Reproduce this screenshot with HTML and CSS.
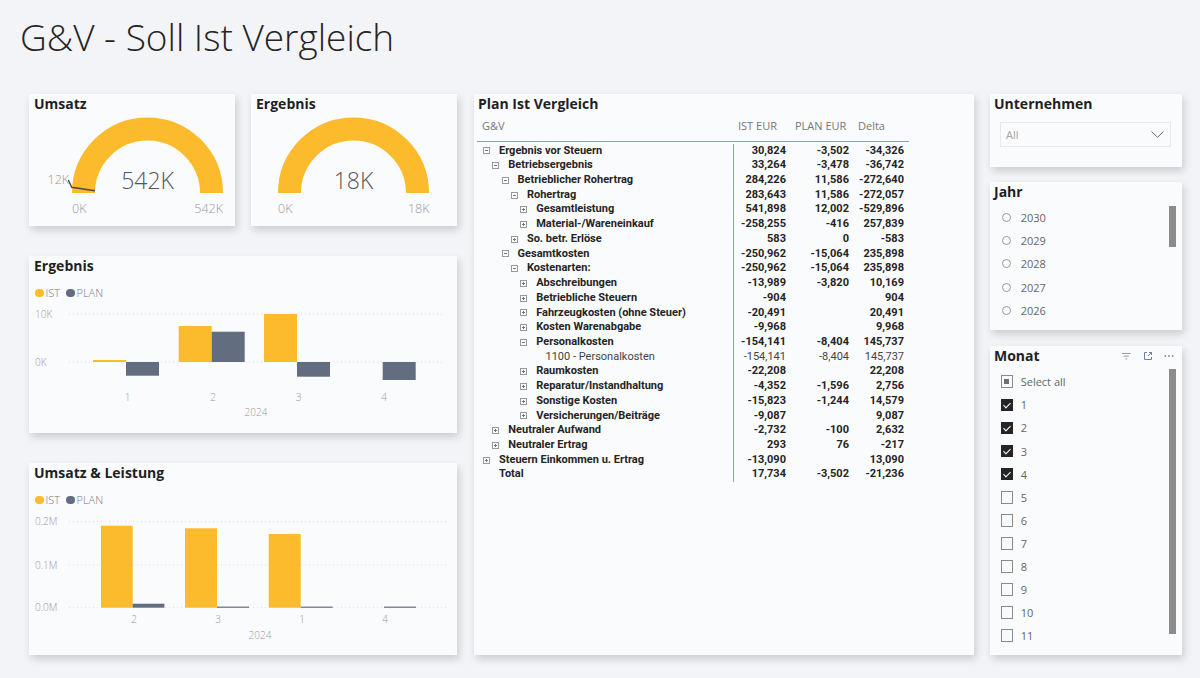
FILE: index.html
```html
<!DOCTYPE html>
<html lang="de">
<head>
<meta charset="utf-8">
<title>G&amp;V - Soll Ist Vergleich</title>
<link rel="stylesheet" href="styles.css">
</head>
<body>
<div class="header"><h1 class="title">G&amp;V - Soll Ist Vergleich</h1></div>
<div class="main">
  <div class="col-left">
    <div class="gauges">
      <div class="card gauge">
        <div class="card-title">Umsatz</div>
        <svg class="gsvg" width="206" height="112" viewBox="0 0 206 112">
          <path class="arc" d="M54.5 79 A64 64 0 0 1 182.5 79"/>
          <polyline class="target" points="39.3,66 42.7,73.3 66,76.7"/>
          <text class="gval" x="118.5" y="75">542K</text>
          <text class="glab" x="43" y="99">0K</text>
          <text class="glab end" x="194" y="99">542K</text>
          <text class="glab" x="18.5" y="69.5">12K</text>
        </svg>
      </div>
      <div class="card gauge">
        <div class="card-title">Ergebnis</div>
        <svg class="gsvg" width="206" height="112" viewBox="0 0 206 112">
          <path class="arc" d="M38.5 79 A64 64 0 0 1 166.5 79"/>
          <text class="gval" x="102.5" y="75">18K</text>
          <text class="glab" x="27" y="99">0K</text>
          <text class="glab end" x="178.5" y="99">18K</text>
        </svg>
      </div>
    </div>

    <div class="card chart1">
      <div class="card-title">Ergebnis</div>
      <div class="legend"><span class="dot ist"></span><span class="lt">IST</span><span class="dot plan"></span><span class="lt">PLAN</span></div>
      <svg class="csvg" width="428" height="129" viewBox="0 0 428 129">
        <line class="grid" x1="40" x2="413" y1="10" y2="10"/>
        <line class="grid" x1="40" x2="413" y1="58" y2="58"/>
        <text class="ax" x="6" y="13.5">10K</text>
        <text class="ax" x="6" y="61.5">0K</text>
        <rect class="by" x="64" y="56" width="33" height="2"/>
        <rect class="bg" x="97" y="58" width="33" height="13.7"/>
        <rect class="by" x="149.7" y="22" width="33" height="36"/>
        <rect class="bg" x="182.7" y="27.7" width="33" height="30.3"/>
        <rect class="by" x="235" y="10" width="33" height="48"/>
        <rect class="bg" x="268" y="58" width="33" height="14.7"/>
        <rect class="bg" x="353.7" y="58" width="33" height="18"/>
        <text class="ax mid" x="98.5" y="96.5">1</text>
        <text class="ax mid" x="184" y="96.5">2</text>
        <text class="ax mid" x="269.5" y="96.5">3</text>
        <text class="ax mid" x="355" y="96.5">4</text>
        <text class="ax mid" x="227" y="111.5">2024</text>
      </svg>
    </div>

    <div class="card chart2">
      <div class="card-title">Umsatz &amp; Leistung</div>
      <div class="legend"><span class="dot ist"></span><span class="lt">IST</span><span class="dot plan"></span><span class="lt">PLAN</span></div>
      <svg class="csvg" width="428" height="144" viewBox="0 0 428 144">
        <line class="grid" x1="40" x2="419" y1="10.7" y2="10.7"/>
        <line class="grid" x1="40" x2="419" y1="54" y2="54"/>
        <line class="grid" x1="40" x2="419" y1="96.7" y2="96.7"/>
        <text class="ax" x="6" y="14.2">0.2M</text>
        <text class="ax" x="6" y="57.5">0.1M</text>
        <text class="ax" x="6" y="100.2">0.0M</text>
        <rect class="by" x="72" y="14.7" width="31.7" height="82"/>
        <rect class="bg" x="103.7" y="92.7" width="31.7" height="4"/>
        <rect class="by" x="156" y="17.3" width="32" height="79.4"/>
        <rect class="bg" x="188" y="95.6" width="32" height="1.2"/>
        <rect class="by" x="239.7" y="23" width="32" height="73.7"/>
        <rect class="bg" x="271.7" y="95.6" width="32" height="1.2"/>
        <rect class="bg" x="355" y="95.6" width="32" height="1.2"/>
        <text class="ax mid" x="105" y="111.5">2</text>
        <text class="ax mid" x="189" y="111.5">3</text>
        <text class="ax mid" x="273" y="111.5">1</text>
        <text class="ax mid" x="356" y="111.5">4</text>
        <text class="ax mid" x="231" y="127.5">2024</text>
      </svg>
    </div>
  </div>

  <div class="col-mid">
    <div class="card matrix">
      <div class="card-title mt">Plan Ist Vergleich</div>
      <div class="tbl">
        <div class="thead"><span class="hc">G&amp;V</span><span class="hc">IST EUR</span><span class="hc">PLAN EUR</span><span class="hc">Delta</span></div>
        <div class="rows">
          <div class="row"><span class="lab l0"><i class="tg m"></i>Ergebnis vor Steuern</span><span class="num ist">30,824</span><span class="num">-3,502</span><span class="num dl">-34,326</span></div>
          <div class="row"><span class="lab l1"><i class="tg m"></i>Betriebsergebnis</span><span class="num ist">33,264</span><span class="num">-3,478</span><span class="num dl">-36,742</span></div>
          <div class="row"><span class="lab l2"><i class="tg m"></i>Betrieblicher Rohertrag</span><span class="num ist">284,226</span><span class="num">11,586</span><span class="num dl">-272,640</span></div>
          <div class="row"><span class="lab l3"><i class="tg m"></i>Rohertrag</span><span class="num ist">283,643</span><span class="num">11,586</span><span class="num dl">-272,057</span></div>
          <div class="row"><span class="lab l4"><i class="tg p"></i>Gesamtleistung</span><span class="num ist">541,898</span><span class="num">12,002</span><span class="num dl">-529,896</span></div>
          <div class="row"><span class="lab l4"><i class="tg p"></i>Material-/Wareneinkauf</span><span class="num ist">-258,255</span><span class="num">-416</span><span class="num dl">257,839</span></div>
          <div class="row"><span class="lab l3"><i class="tg p"></i>So. betr. Erlöse</span><span class="num ist">583</span><span class="num">0</span><span class="num dl">-583</span></div>
          <div class="row"><span class="lab l2"><i class="tg m"></i>Gesamtkosten</span><span class="num ist">-250,962</span><span class="num">-15,064</span><span class="num dl">235,898</span></div>
          <div class="row"><span class="lab l3"><i class="tg m"></i>Kostenarten:</span><span class="num ist">-250,962</span><span class="num">-15,064</span><span class="num dl">235,898</span></div>
          <div class="row"><span class="lab l4"><i class="tg p"></i>Abschreibungen</span><span class="num ist">-13,989</span><span class="num">-3,820</span><span class="num dl">10,169</span></div>
          <div class="row"><span class="lab l4"><i class="tg p"></i>Betriebliche Steuern</span><span class="num ist">-904</span><span class="num"></span><span class="num dl">904</span></div>
          <div class="row"><span class="lab l4"><i class="tg p"></i>Fahrzeugkosten (ohne Steuer)</span><span class="num ist">-20,491</span><span class="num"></span><span class="num dl">20,491</span></div>
          <div class="row"><span class="lab l4"><i class="tg p"></i>Kosten Warenabgabe</span><span class="num ist">-9,968</span><span class="num"></span><span class="num dl">9,968</span></div>
          <div class="row"><span class="lab l4"><i class="tg m"></i>Personalkosten</span><span class="num ist">-154,141</span><span class="num">-8,404</span><span class="num dl">145,737</span></div>
          <div class="row leaf"><span class="lab l5"><i class="tg none"></i>1100 - Personalkosten</span><span class="num ist">-154,141</span><span class="num">-8,404</span><span class="num dl">145,737</span></div>
          <div class="row"><span class="lab l4"><i class="tg p"></i>Raumkosten</span><span class="num ist">-22,208</span><span class="num"></span><span class="num dl">22,208</span></div>
          <div class="row"><span class="lab l4"><i class="tg p"></i>Reparatur/Instandhaltung</span><span class="num ist">-4,352</span><span class="num">-1,596</span><span class="num dl">2,756</span></div>
          <div class="row"><span class="lab l4"><i class="tg p"></i>Sonstige Kosten</span><span class="num ist">-15,823</span><span class="num">-1,244</span><span class="num dl">14,579</span></div>
          <div class="row"><span class="lab l4"><i class="tg p"></i>Versicherungen/Beiträge</span><span class="num ist">-9,087</span><span class="num"></span><span class="num dl">9,087</span></div>
          <div class="row"><span class="lab l1"><i class="tg p"></i>Neutraler Aufwand</span><span class="num ist">-2,732</span><span class="num">-100</span><span class="num dl">2,632</span></div>
          <div class="row"><span class="lab l1"><i class="tg p"></i>Neutraler Ertrag</span><span class="num ist">293</span><span class="num">76</span><span class="num dl">-217</span></div>
          <div class="row"><span class="lab l0"><i class="tg p"></i>Steuern Einkommen u. Ertrag</span><span class="num ist">-13,090</span><span class="num"></span><span class="num dl">13,090</span></div>
          <div class="row"><span class="lab l0"><i class="tg none"></i>Total</span><span class="num ist">17,734</span><span class="num">-3,502</span><span class="num dl">-21,236</span></div>
        </div>
      </div>
    </div>
  </div>

  <div class="col-right">
    <div class="card s-unt">
      <div class="card-title st">Unternehmen</div>
      <div class="dropdown"><span>All</span>
        <svg width="13" height="7" viewBox="0 0 13 7"><polyline points="0.5,0.5 6.5,6.3 12.5,0.5" class="chev"/></svg>
      </div>
    </div>
    <div class="card s-jahr">
      <div class="card-title st">Jahr</div>
      <div class="sbody">
        <div class="slist">
          <div class="sitem"><span class="radio"></span>2030</div>
          <div class="sitem"><span class="radio"></span>2029</div>
          <div class="sitem"><span class="radio"></span>2028</div>
          <div class="sitem"><span class="radio"></span>2027</div>
          <div class="sitem"><span class="radio"></span>2026</div>
        </div>
        <div class="track"><div class="thumb j"></div></div>
      </div>
    </div>
    <div class="card s-monat">
      <div class="shead">
        <div class="card-title st">Monat</div>
        <div class="icons">
          <svg width="9" height="7" viewBox="0 0 9 7" class="ic"><path d="M0 0.5H8.5M1.7 3.2H6.8M3.3 5.9H5.2" class="icf"/></svg>
          <svg width="10" height="10" viewBox="0 0 10 10" class="ic ic2"><path d="M4 1.5H1.5V8.5H8.5V6M5 5L8.5 1.5M6 1.5H8.5V4" class="icb"/></svg>
          <svg width="10" height="4" viewBox="0 0 10 4" class="ic ic3"><circle cx="1.3" cy="2" r="0.9"/><circle cx="5" cy="2" r="0.9"/><circle cx="8.7" cy="2" r="0.9"/></svg>
        </div>
      </div>
      <div class="sbody m">
        <div class="slist">
          <div class="sitem"><span class="cb all"></span>Select all</div>
          <div class="sitem"><span class="cb on"></span>1</div>
          <div class="sitem"><span class="cb on"></span>2</div>
          <div class="sitem"><span class="cb on"></span>3</div>
          <div class="sitem"><span class="cb on"></span>4</div>
          <div class="sitem"><span class="cb"></span>5</div>
          <div class="sitem"><span class="cb"></span>6</div>
          <div class="sitem"><span class="cb"></span>7</div>
          <div class="sitem"><span class="cb"></span>8</div>
          <div class="sitem"><span class="cb"></span>9</div>
          <div class="sitem"><span class="cb"></span>10</div>
          <div class="sitem"><span class="cb"></span>11</div>
        </div>
        <div class="track"><div class="thumb mo"></div></div>
      </div>
    </div>
  </div>
</div>
</body>
</html>
```

FILE: styles.css
```css
* { box-sizing: border-box; margin: 0; padding: 0; }
html, body { width: 1200px; height: 678px; overflow: hidden; }
body { background: #f3f4f8; font-family: "Open Sans", sans-serif; color: #252423; }

.header { height: 94px; padding: 17px 0 0 20px; }
.title { font-weight: 300; font-size: 37px; line-height: 40px; color: #252423; }

.main { display: flex; padding-left: 29px; }
.col-left { width: 428px; display: flex; flex-direction: column; }
.col-mid { width: 500px; margin-left: 17px; }
.col-right { width: 192px; margin-left: 16px; display: flex; flex-direction: column; }

.card { background: #fafbfd; box-shadow: 2px 4px 8px rgba(0, 0, 0, 0.17); }
.card-title { font-weight: 700; font-size: 14px; line-height: 20px; padding-left: 5px; color: #1f1f1f; }

.gauges { display: flex; gap: 16px; }
.gauge { width: 206px; height: 132px; }
.gsvg { display: block; }
.arc { fill: none; stroke: #fcbb2c; stroke-width: 23; }
.target { fill: none; stroke: #4a4a4a; stroke-width: 1.4; }
.gval { font-family: "Open Sans", sans-serif; font-weight: 300; font-size: 23px; fill: #555; text-anchor: middle; }
.glab { font-family: "Open Sans", sans-serif; font-weight: 300; font-size: 12.5px; fill: #999; }
.glab.end { text-anchor: end; }

.chart1 { height: 177px; margin-top: 30px; }
.chart2 { height: 192px; margin-top: 30px; }
.legend { display: flex; align-items: center; height: 16px; margin-top: 9px; padding-left: 6px; }
.dot { width: 8.5px; height: 8.5px; border-radius: 50%; margin-right: 2px; }
.dot.ist { background: #fcbb2c; }
.dot.plan { background: #636d80; margin-left: 6px; }
.lt { font-size: 11px; color: #7a7a7a; font-weight: 300; line-height: 16px; }
.csvg { display: block; margin-top: 3px; }
.grid { stroke: #dcdcdc; stroke-width: 1; stroke-dasharray: 1 3; }
.ax { font-family: "Open Sans", sans-serif; font-size: 10px; font-weight: 300; fill: #999; }
.ax.mid { text-anchor: middle; }
.by { fill: #fcbb2c; }
.bg { fill: #636d80; }

.matrix { height: 561px; }
.card-title.mt { padding-left: 4px; }
.tbl { margin-left: 3px; width: 432px; }
.thead {
  display: grid; grid-template-columns: 256px 57px 63px 56px;
  height: 24px; margin-top: 4px; padding-bottom: 8px;
  border-bottom: 1px solid #8d9fbf; align-items: end;
  font-size: 11px; line-height: 14px; color: #777;
}
.hc { padding-left: 5px; white-space: nowrap; }
.rows { padding-top: 1.6px; }
.row {
  display: grid; grid-template-columns: 256px 57px 63px 56px;
  height: 14.73px; line-height: 14.73px;
  font-family: Roboto, "Open Sans", sans-serif; font-size: 11px; font-weight: 700; color: #252423;
}
.row.leaf { font-weight: 400; color: #444; }
.lab { display: flex; align-items: center; white-space: nowrap; }
.l0 { padding-left: 6px; }
.l1 { padding-left: 15.3px; }
.l2 { padding-left: 24.6px; }
.l3 { padding-left: 33.9px; }
.l4 { padding-left: 43.2px; }
.l5 { padding-left: 52.5px; }
.num { text-align: right; padding-right: 4px; white-space: nowrap; }
.num.ist { border-left: 1px solid #8d9fbf; }
.num.dl { padding-right: 5px; }
.tg { display: inline-block; width: 7px; height: 7px; border: 1px solid #9a9a9a; margin-right: 9px; position: relative; flex: none; }
.tg.none { border-color: transparent; }
.tg.m::before, .tg.p::before { content: ""; position: absolute; left: 1px; top: 2px; width: 3px; height: 1px; background: #777; }
.tg.p::after { content: ""; position: absolute; left: 2px; top: 1px; width: 1px; height: 3px; background: #777; }

.s-unt { height: 73px; }
.card-title.st { padding-left: 4px; }
.dropdown {
  margin: 8px 0 0 10px; width: 171px; height: 25px;
  border: 1px solid #e7e8ee; display: flex; align-items: center; justify-content: space-between;
  padding: 0 6px 0 5px; font-size: 11px; color: #a5a5a5;
}
.chev { fill: none; stroke: #6a6a6a; stroke-width: 1; }

.s-jahr { height: 148px; margin-top: 15px; }
.sbody { display: flex; padding-top: 3.7px; }
.sbody.m { padding-top: 4.2px; }
.slist { flex: 1; }
.sitem { display: flex; align-items: center; height: 23.25px; font-size: 11px; color: #666; font-weight: 400; padding-left: 12.4px; }
.sbody.m .sitem { height: 23.1px; padding-left: 10.7px; }
.radio { width: 9px; height: 9px; border: 1px solid #9a9a9a; border-radius: 50%; margin-right: 9.3px; }
.cb { width: 12.6px; height: 12.6px; border: 1px solid #8a8a8a; margin-right: 7.4px; position: relative; flex: none; }
.cb.on { background: #252525; border-color: #252525; }
.cb.on::after { content: ""; position: absolute; left: 3.6px; top: 1.6px; width: 3px; height: 6px; border: solid #fff; border-width: 0 1.1px 1.1px 0; transform: rotate(45deg); }
.cb.all::after { content: ""; position: absolute; left: 2.8px; top: 2.8px; width: 5px; height: 5px; background: #6f6f6f; }
.track { width: 7px; margin-right: 6px; }
.thumb { background: #8c8c8c; width: 7px; }
.thumb.j { height: 41px; }
.thumb.mo { height: 265px; margin-top: -1.4px; }

.s-monat { height: 309px; margin-top: 16px; }
.shead { display: flex; align-items: center; justify-content: space-between; }
.icons { display: flex; align-items: center; padding-right: 8px; }
.ic { display: block; }
.icf { fill: none; stroke: #9a9a9a; stroke-width: 1; }
.ic2 { margin-left: 12px; }
.icb { fill: none; stroke: #6e7bab; stroke-width: 1; }
.ic3 { margin-left: 11px; fill: #8a8a8a; }
```
